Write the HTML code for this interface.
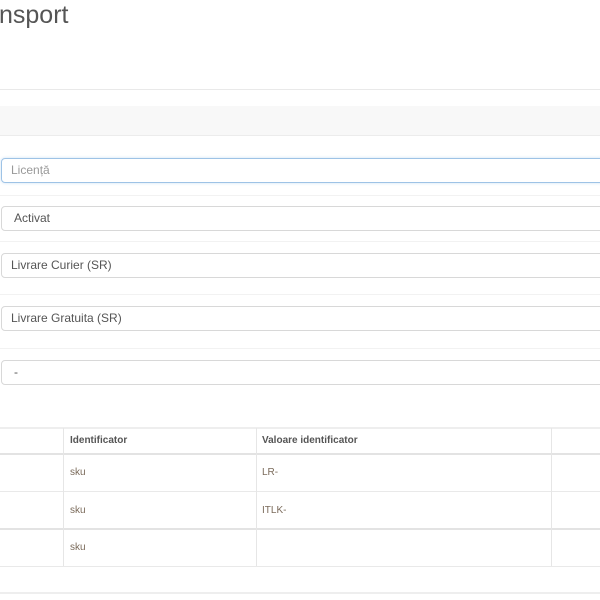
<!DOCTYPE html>
<html><head><meta charset="utf-8"><style>
body{margin:0;width:600px;height:600px;overflow:hidden;background:#fff;font-family:"Liberation Sans",sans-serif;position:relative}
.a{position:absolute}
.h{left:0;right:0;height:1px;background:#e9e9e9}
.in{position:absolute;left:1px;width:620px;height:23px;border:1px solid #d8d8d8;border-radius:4px;font-size:12px;color:#555;line-height:23px;padding-left:9px;box-sizing:content-box}
.t{font-size:10px;color:#7a6a5a}
.th{font-size:10px;font-weight:bold;color:#555}
.v{top:428px;height:138px;width:1px;background:#e6e6e6}
</style></head><body>
<div class="a" style="left:-1px;top:1px;font-size:25px;color:#555">nsport</div>
<div class="a h" style="top:89px"></div>
<div class="a" style="left:0;right:0;top:106px;height:29px;background:#f8f8f8;border-bottom:1px solid #ececec"></div>
<div class="in" style="top:158px;border-color:#9ec3e6;box-shadow:0 0 3px #cfe1f3;color:#999">Licență</div>
<div class="a h" style="top:195px;background:#f2f2f2"></div>
<div class="in" style="top:206px;padding-left:12px">Activat</div>
<div class="a h" style="top:241px;background:#f2f2f2"></div>
<div class="in" style="top:253px">Livrare Curier (SR)</div>
<div class="a h" style="top:294px;background:#f2f2f2"></div>
<div class="in" style="top:306px">Livrare Gratuita (SR)</div>
<div class="a h" style="top:348px;background:#f2f2f2"></div>
<div class="in" style="top:360px;padding-left:12px">-</div>
<div class="a h" style="top:427px;height:2px;background:#eee"></div>
<div class="a h" style="top:453px;height:2px;background:#e3e3e3"></div>
<div class="a h" style="top:491px"></div>
<div class="a h" style="top:528px;height:2px;background:#e3e3e3"></div>
<div class="a h" style="top:566px"></div>
<div class="a h" style="top:592px;height:2px;background:#eee"></div>
<div class="a v" style="left:63px"></div>
<div class="a v" style="left:256px"></div>
<div class="a v" style="left:551px"></div>
<div class="a th" style="left:70px;top:435px">Identificator</div>
<div class="a th" style="left:262px;top:435px">Valoare identificator</div>
<div class="a t" style="left:70px;top:467px">sku</div>
<div class="a t" style="left:262px;top:467px">LR-</div>
<div class="a t" style="left:70px;top:505px">sku</div>
<div class="a t" style="left:262px;top:505px">ITLK-</div>
<div class="a t" style="left:70px;top:542px">sku</div>
</body></html>
